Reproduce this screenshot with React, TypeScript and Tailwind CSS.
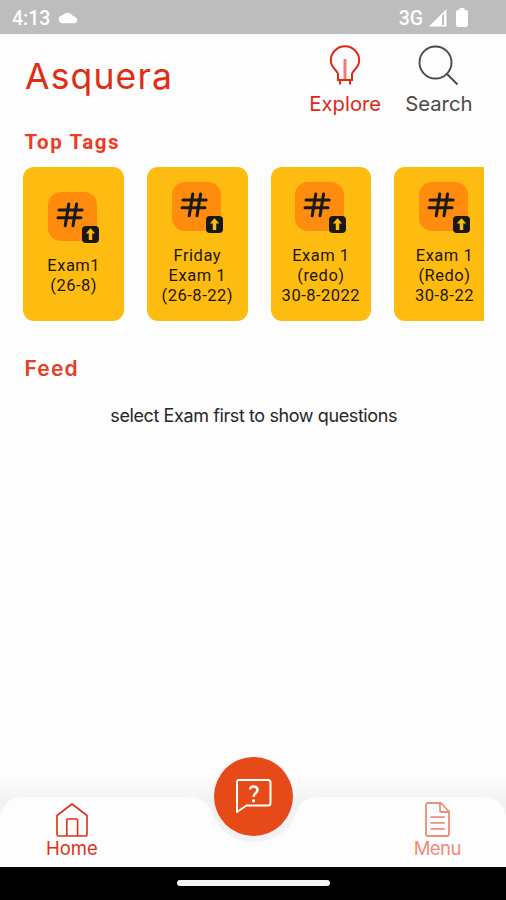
import { ReactNode } from "react";

interface Tag {
  id: number;
  lines: string[];
}

const tags: Tag[] = [
  { id: 1, lines: ["Exam1", "(26-8)"] },
  { id: 2, lines: ["Friday", "Exam 1", "(26-8-22)"] },
  { id: 3, lines: ["Exam 1", "(redo)", "30-8-2022"] },
  { id: 4, lines: ["Exam 1", "(Redo)", "30-8-22"] },
];

function StatusBar() {
  return (
    <div className="h-[34px] shrink-0 bg-[#bdbdbd] flex items-center justify-between pl-3 pr-[38px] text-white font-['Roboto',sans-serif]">
      <div className="flex items-center gap-2">
        <span className="text-[19.5px] leading-none pt-[3px] font-medium">4:13</span>
        <svg width="21" height="13" viewBox="0 0 21 13" fill="currentColor">
          <path d="M4.2 12.2a3.900 3.900 0 0 1-.7-7.600L7 2.500A5.500 5.500 0 0 1 14.500 4.500L18 6.500a3.300 3.300 0 0 1-1 5.700z" />
        </svg>
      </div>
      <div className="flex items-center">
        <span className="text-[19.5px] leading-none pt-[3px] font-medium">3G</span>
        <svg className="ml-1.5 mt-px" width="18" height="18" viewBox="0 0 18 18">
          <path d="M0 17.5 17.5 0v17.5z" fill="#fff" />
          <path d="M13 6.500v9.500h2V4.500z" fill="#bdbdbd" />
        </svg>
        <svg className="ml-[9px]" width="12" height="19" viewBox="0 0 12 19" fill="currentColor">
          <path d="M3.500 0h5v2H10a2 2 0 0 1 2 2v13a2 2 0 0 1-2 2H2a2 2 0 0 1-2-2V4a2 2 0 0 1 2-2h1.500z" />
        </svg>
      </div>
    </div>
  );
}

function HeaderAction({ label, className, children }: { label: string; className: string; children: ReactNode }) {
  return (
    <button className={`flex flex-col items-center ${className}`}>
      {children}
      <span className="mt-[6px] text-[20.3px] leading-6 whitespace-nowrap">{label}</span>
    </button>
  );
}

function TagCard({ tag }: { tag: Tag }) {
  return (
    <div className="w-[100.7px] h-[154px] shrink-0 rounded-[11px] bg-[#ffbc10] flex flex-col items-center justify-center">
      <div className="relative -left-px w-[49px] h-[49px] rounded-[13px] bg-[#ff8c0c]">
        <svg width="49" height="49" viewBox="0 0 49 49" fill="none" stroke="#181818" strokeWidth="3" strokeLinecap="round">
          <path d="M20.8 12 17.200 33.800M28.600 12 25 33.800" />
          <path d="M11 18H34.200M10 25.800H33" />
        </svg>
        <div className="absolute -right-[2px] -bottom-[2px] w-[17px] h-[17px] rounded-[4px] bg-[#181818]">
          <svg width="17" height="17" viewBox="0 0 17 17" fill="#ffbc10">
            <path d="M8.500 2.200 13.200 7.600H10.200V14H6.800V7.600H3.800z" />
          </svg>
        </div>
      </div>
      <div className="mt-[15px] -mb-px text-center text-[16.5px] leading-5 text-[#1d1804] font-['Roboto',sans-serif] tracking-[0.5px]">
        {tag.lines.map((line) => (
          <p key={line}>{line}</p>
        ))}
      </div>
    </div>
  );
}

function BottomNav() {
  return (
    <nav className="relative h-[71px] shrink-0 flex justify-between pl-[46px] pr-[45px] text-[18.5px]">
      {/* notched bar behind the items */}
      <svg
        className="absolute left-0 -top-[30px] pointer-events-none"
        width="506"
        height="101"
        viewBox="0 -30 506 101"
      >
        <defs>
          <linearGradient id="shade" x1="0" y1="0" x2="0" y2="1">
            <stop offset="0" stopColor="#f4f4f4" stopOpacity="0" />
            <stop offset="1" stopColor="#f4f4f4" />
          </linearGradient>
        </defs>
        <rect y="-18" width="506" height="20" fill="url(#shade)" />
        <rect y="2" width="506" height="69" fill="#f2f2f2" />
        <path
          d="M0 20C3 8 10 1 22 1H188C202 1 209 7 212 17C218 35 235 46 254 46C273 46 290 35 296 17C299 7 306 1 320 1H484C496 1 503 8 506 20V71H0z"
          fill="#fdfdfd"
        />
      </svg>
      <button className="relative flex flex-col items-center text-[#dd3018]">
        <svg className="mt-[7px]" width="32" height="34" viewBox="0 0 32 34" fill="none" stroke="currentColor" strokeWidth="1.6" strokeLinejoin="round">
          <path d="M1 12.500 16 1 31 12.500V31.500a1.500 1.500 0 0 1-1.500 1.500H2.500A1.500 1.500 0 0 1 1 31.500z" />
          <path d="M10.800 33V17a1 1 0 0 1 1-1h8.800a1 1 0 0 1 1 1V33" />
        </svg>
        <span className="leading-[22px]">Home</span>
      </button>
      <button className="relative flex flex-col items-center text-[#ec8c79]">
        <svg className="mt-1.5" width="25" height="35" viewBox="0 0 25 35" fill="none" stroke="currentColor" strokeWidth="1.8" strokeLinejoin="round">
          <path d="M16 1H3a2 2 0 0 0-2 2V32a2 2 0 0 0 2 2H22a2 2 0 0 0 2-2V9.500z" />
          <path d="M15 1V8.500a1.500 1.500 0 0 0 1.500 1.500H24" />
          <path d="M5.500 15.200H19.800M5.500 20.800H19.800M5.500 26.800H19.800" />
        </svg>
        <span className="leading-[22px] tracking-[-0.5px]">Menu</span>
      </button>
      <button className="absolute left-[214px] -top-[39px] w-[79px] h-[79px] rounded-full bg-[#e64a19] text-white">
        <svg width="79" height="79" viewBox="0 0 79 79" fill="none" stroke="currentColor" strokeWidth="2" strokeLinejoin="round">
          <path d="M25 23H54a2.500 2.500 0 0 1 2.500 2.500V46a2.500 2.500 0 0 1-2.500 2.500H32.500L23 55V25a2 2 0 0 1 2-2z" />
          <path d="M36 32.500C36 28.500 43.500 28.500 43.500 33C43.500 36.500 39.500 36 39.500 40" strokeWidth="2.5" />
          <circle cx="39.5" cy="43.8" r="1.6" fill="currentColor" stroke="none" />
        </svg>
      </button>
    </nav>
  );
}

export default function App() {
  return (
    <div className="w-[506px] h-[900px] flex flex-col overflow-hidden bg-[#fdfdfd] font-['Inter',sans-serif]">
      <StatusBar />
      <header className="h-[88px] flex justify-between pl-[25px] pr-[33.5px]">
        <h1 className="mt-[21px] text-[35.5px] leading-[44px] tracking-[1.15px] text-[#e02c14]">Asquera</h1>
        <div className="flex gap-[24px] pt-[11px]">
          <HeaderAction label="Explore" className="text-[#e02814]">
            <svg width="32" height="41" viewBox="0 0 32 41" fill="none" stroke="currentColor" strokeWidth="2">
              <path d="M9 35V29C9 26 1.800 23 1.800 15.500a14.200 14.200 0 0 1 28.400 0C30.200 23 23 26 23 29V35z" />
              <path d="M11 35v4.500M21 35v4.500" />
              <path d="M16 14V35" strokeWidth="3" opacity="0.6" />
            </svg>
          </HeaderAction>
          <HeaderAction label="Search" className="text-[#4a4a4a]">
            <svg width="41" height="41" viewBox="0 0 41 41" fill="none" stroke="currentColor" strokeWidth="1.9">
              <circle cx="17.5" cy="17.5" r="16" />
              <path d="M28.500 28.500 39.500 39.500" />
            </svg>
          </HeaderAction>
        </div>
      </header>

      <main className="flex-1 flex flex-col pl-[23.4px] pr-[22px]">
        <h2 className="mt-[8px] pl-px text-[20.5px] leading-6 font-bold tracking-[1.6px] text-[#ef3b24] font-['Roboto',sans-serif]">
          Top Tags
        </h2>
        <div className="mt-[12.5px] flex gap-[22.9px] overflow-hidden">
          {tags.map((tag) => (
            <TagCard key={tag.id} tag={tag} />
          ))}
        </div>
        <h2 className="mt-[36px] pl-px text-[21px] leading-6 font-semibold tracking-[1.2px] text-[#e2401f]">Feed</h2>
        <p className="mt-[23px] text-center text-[18px] leading-6 tracking-[-0.4px] text-[#262626]">
          select Exam first to show questions
        </p>
      </main>

      <BottomNav />
      <div className="h-[33px] shrink-0 bg-black flex justify-center">
        <div className="mt-[13px] w-[153px] h-[6px] rounded-full bg-[#f4f4f4]" />
      </div>
    </div>
  );
}
